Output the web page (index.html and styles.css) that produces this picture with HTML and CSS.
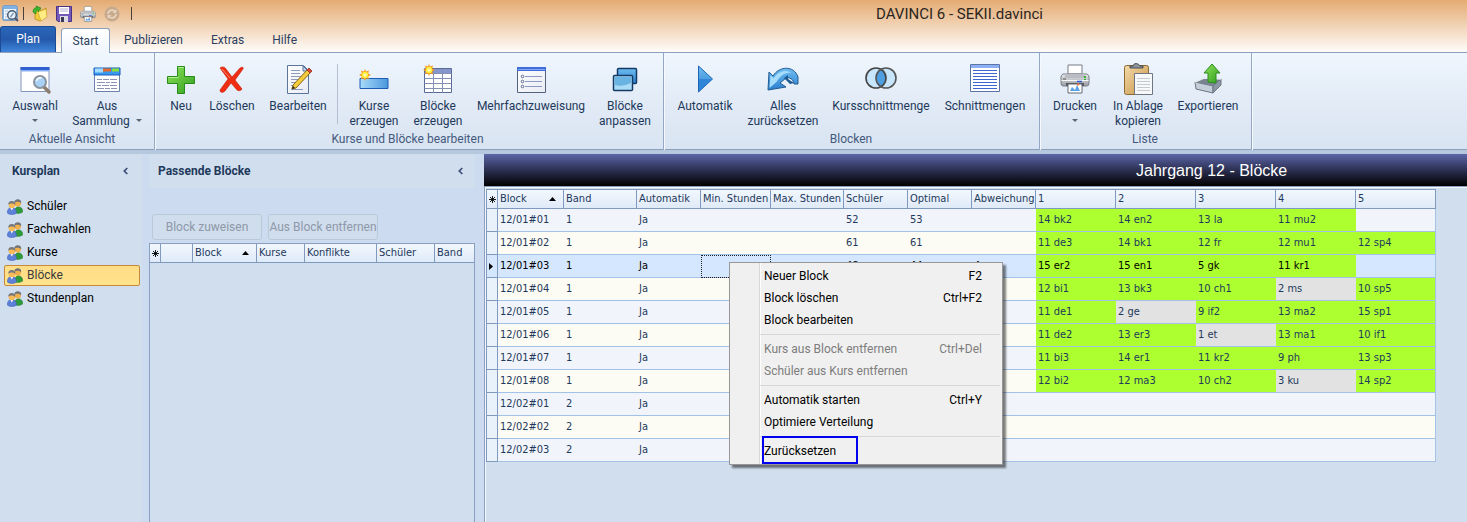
FILE: index.html
```html
<!DOCTYPE html>
<html lang="de">
<head>
<meta charset="utf-8">
<title>DAVINCI 6 - SEKII.davinci</title>
<link rel="stylesheet" href="styles.css">
</head>
<body>
<svg class="defs" aria-hidden="true">
  <defs>
    <linearGradient id="sky" x1="0" y1="0" x2="1" y2="0"><stop offset="0" stop-color="#a8dcfb"/><stop offset="1" stop-color="#4a97dc"/></linearGradient>
    <linearGradient id="blueV" x1="0" y1="0" x2="0" y2="1"><stop offset="0" stop-color="#6fbdf0"/><stop offset="1" stop-color="#2a7fd0"/></linearGradient>
    <linearGradient id="greenV" x1="0" y1="0" x2="1" y2="1"><stop offset="0" stop-color="#8fe35c"/><stop offset="1" stop-color="#2f9d1c"/></linearGradient>
    <linearGradient id="grayV" x1="0" y1="0" x2="0" y2="1"><stop offset="0" stop-color="#e6e8ea"/><stop offset="1" stop-color="#9a9ea4"/></linearGradient>
    <linearGradient id="wood" x1="0" y1="0" x2="1" y2="1"><stop offset="0" stop-color="#f3dba8"/><stop offset="1" stop-color="#c79245"/></linearGradient>
    <linearGradient id="paper" x1="0" y1="0" x2="1" y2="1"><stop offset="0" stop-color="#ffffff"/><stop offset="1" stop-color="#e8ebf3"/></linearGradient>
    <symbol id="star" viewBox="0 0 12 12"><path d="M6 0l1.100 2.600L10 1.500 9.200 4.500 12 6 9.200 7.300 10 10.300 7.100 9.400 6 12 4.900 9.400 2 10.300 2.800 7.300 0 6 2.800 4.500 2 1.500 4.900 2.600z" fill="#f79a1e"/><circle cx="6" cy="6" r="3.200" fill="#ffef3c"/><circle cx="6" cy="6" r="1.500" fill="#fffbc0"/></symbol>
    <symbol id="people" viewBox="0 0 16 16">
      <path d="M7.500 13.800c0-3.800 1.500-6 4-6 2.800 0 4.200 2.200 4.200 5.200-2 1.600-5.500 1.800-8.200.8z" fill="#2f9a3a" stroke="#1e7a2a" stroke-width=".5"/>
      <circle cx="10.800" cy="4.300" r="3.200" fill="#f2b04c"/><path d="M7.300 4c-.3-2.300 1.400-3.700 3.500-3.700 2.200 0 3.700 1.600 3.400 4-.8-1-2.200-1.600-3.500-1.600-1.200 0-2.500.3-3.400 1.300z" fill="#707478"/>
      <path d="M.3 14c0-3.500 1.500-5.500 4.300-5.500 3 0 4.900 2 4.900 5.500-2.500 2-6.800 2-9.200 0z" fill="#5d80d8" stroke="#3c5fbc" stroke-width=".5"/>
      <path d="M3.300 8.700l1.500 2.800 1.500-2.800z" fill="#fff"/>
      <circle cx="4.900" cy="6" r="3.200" fill="#f7bb58"/><path d="M1.300 5.700C1 3.400 2.600 2 4.700 2c2.300 0 3.900 1.600 3.600 4-.8-1-2.200-1.600-3.500-1.600-1.300 0-2.600.3-3.500 1.300z" fill="#75797d"/>
    </symbol>
    <symbol id="printer" viewBox="0 0 30 30">
      <path d="M8 10V1h14v9z" fill="#fff" stroke="#777c84"/>
      <path d="M3 10h24q2 1 2 3v6q0 3-2 3H3q-2 0-2-3v-6q0-2 2-3z" fill="url(#grayV)" stroke="#7b8088"/>
      <path d="M5 10h20v4H5z" fill="#b9bdc3"/><path d="M1.500 16.500h27" stroke="#f7f8f9"/>
      <path d="M6 19h18v3H6z" fill="#53575d"/><path d="M17 17.500h5" stroke="#2e5cd8" stroke-width="1.500"/>
      <path d="M25 12v2M25 15v1" stroke="#35b52c" stroke-width="2"/><path d="M3 15h3" stroke="#555"/>
      <path d="M8 20h14v9H8z" fill="#fff" stroke="#656a72"/><path d="M10 27l2-4 3 3 2-5 3 6z" fill="#58a3e8"/><path d="M17 21l2-1" stroke="#f47c4c" stroke-width="2"/>
    </symbol>
    <symbol id="asterisk" viewBox="0 0 7 7"><path d="M3.500 0v7M0 3.500h7M1 1l5 5M6 1L1 6" stroke="#000" stroke-width=".9"/></symbol>
    <symbol id="sortup" viewBox="0 0 7 4"><path d="M3.500 0L7 4H0z" fill="#000"/></symbol>
    <symbol id="chevron" viewBox="0 0 5 8"><path d="M4.300 1L1.300 4l3 3" fill="none" stroke="#3d4d78" stroke-width="1.700"/></symbol>
  </defs>
</svg>

<div class="app">
  <header class="caption">
    <div class="quick">
      <svg width="17" height="17" viewBox="0 0 17 17"><rect x=".5" y=".5" width="15" height="15" rx="2" fill="#7fb2e2" stroke="#7d9dc2"/><path d="M2 4h12v10H2z" fill="#eef5fc"/><path d="M3 6h3M3 9h2M3 12h2" stroke="#a9c3e0"/><circle cx="10" cy="10" r="4.300" fill="#e5f1fb" stroke="#485a70" stroke-width="1.500"/><path d="M8.500 12l3-4" stroke="#7593b5" stroke-width="1.300"/><path d="M13 13l3 3" stroke="#556" stroke-width="2"/></svg>
      <span class="quick-sep"></span>
      <button class="quick-btn" aria-label="Öffnen"><svg width="16" height="16" viewBox="0 0 16 16"><path d="M3 4l5-1 1 2 5-3v9l-6 4-5-2z" fill="#f3cc3a" stroke="#b88d18" stroke-width=".8"/><path d="M6 6l8-3 1 8-6 4z" fill="#ffec83" stroke="#c69c22" stroke-width=".6"/><path d="M1 6c0-3 2-5 4-4l-1-2 5 2-3 4v-2C4 4 4 6 4 8z" fill="#3cb82e" stroke="#1b7c17" stroke-width=".6"/></svg></button>
      <button class="quick-btn" aria-label="Speichern"><svg width="16" height="16" viewBox="0 0 16 16"><path d="M.5.5h15v15H2L.5 14z" fill="#7459b8" stroke="#493187"/><path d="M3 1h10v7H3z" fill="#fff"/><path d="M4 3h8M4 5h8" stroke="#b6aed0"/><path d="M4 10h8v6H4z" fill="#dddce6"/><path d="M5 11h3v5H5z" fill="#3c3854"/></svg></button>
      <button class="quick-btn" aria-label="Drucken"><svg width="16" height="16"><use href="#printer"/></svg></button>
      <button class="quick-btn" aria-label="Wiederholen" disabled><svg width="16" height="16" viewBox="0 0 16 16"><circle cx="8" cy="8" r="7.500" fill="#c7aa8c"/><path d="M4 8a4 4 0 0 1 7-2.500M12 8a4 4 0 0 1-7 2.500" fill="none" stroke="#e9d4bd" stroke-width="1.800"/><path d="M12.500 3v4h-4zM3.500 13V9h4z" fill="#e9d4bd"/></svg></button>
      <span class="quick-sep last"></span>
    </div>
    <h1 class="caption-title">DAVINCI 6 - SEKII.davinci</h1>
  </header>

  <nav class="tabs">
    <button class="tab plan">Plan</button>
    <button class="tab active">Start</button>
    <button class="tab">Publizieren</button>
    <button class="tab">Extras</button>
    <button class="tab">Hilfe</button>
  </nav>

  <section class="ribbon">
    <div class="group view">
      <div class="tools">
        <button class="tool w70"><svg width="32" height="32" viewBox="0 0 32 32"><path d="M2 3.500h28v24H2z" fill="#fff" stroke="#8496bb"/><path d="M1.500 3h29v3h-29z" fill="#2f5fd0"/><path d="M2 6h28v1.500H2z" fill="#86aef2"/><path d="M25 23l5 5" stroke="#8d7d6d" stroke-width="3.500" stroke-linecap="round"/><circle cx="21" cy="18" r="6" fill="#a9d2f6" stroke="#8a939e" stroke-width="2"/><path d="M17.500 17a4 4 0 0 1 5-3" fill="none" stroke="#fff" stroke-width="1.500"/></svg><span class="cap">Auswahl</span><i class="drop"></i></button>
        <button class="tool w74"><svg width="32" height="32" viewBox="0 0 32 32"><path d="M3.500 4.500h25v23h-25z" fill="#fff" stroke="#6c82a8"/><path d="M3 4h26v7H3z" fill="#3a98ee" stroke="#1a5dbc"/><path d="M4 4.500h8v4H4z" fill="#a6dcff"/><path d="M12 4.500h8v3h-8z" fill="#e56a2d"/><path d="M21 4.500h7v3h-7z" fill="#8adf38"/><path d="M6 15.500h5m1 0h6m1 0h7M6 18.500h8m1 0h4m1 0h6M6 21.500h4m1 0h7m1 0h7M6 24.500h7m1 0h5m1 0h6" stroke="#8a93b4"/></svg><span class="cap">Aus<br>Sammlung<i class="drop beside"></i></span></button>
      </div>
      <h2 class="group-name">Aktuelle Ansicht</h2>
    </div>
    <div class="group edit">
      <div class="tools">
        <button class="tool w44"><svg width="32" height="32" viewBox="0 0 32 32"><path d="M12.500 2.500h7v10h10v7h-10v10h-7v-10h-10v-7h10z" fill="url(#greenV)" stroke="#278a1b"/><path d="M13.500 3.500h5M3.500 13.500h10" stroke="#b8f094"/></svg><span class="cap">Neu</span></button>
        <button class="tool w58"><svg width="32" height="32" viewBox="0 0 32 32"><path d="M4 4c2-2 5-1 6 1l6 8 8-9c2-1 4-1 3 1l-8 11 7 9c-1 2-4 2-5 1l-6-7-6 8c-2 2-5 2-5-1l8-11z" fill="#ee2d12" stroke="#c81d0a" stroke-width=".6"/><path d="M6 5l8 9" stroke="#ff8a6c"/></svg><span class="cap">Löschen</span></button>
        <button class="tool w74"><svg width="32" height="32" viewBox="0 0 32 32"><path d="M5.500 1.500h16l5 5v23h-21z" fill="url(#paper)" stroke="#5b7499"/><path d="M21 2v5h5z" fill="#c9daf0" stroke="#5b7499"/><path d="M9 6.500h9M9 9.500h9M9 12.500h12M9 15.500h9M9 18.500h7M9 21.500h4M9 25.500h12" stroke="#8d9bbb"/><path d="M11 21L26 5l3 3-15 16-4 1z" fill="#f5cc3c" stroke="#87651a"/><path d="M25 6l2-2 3 3-2 2z" fill="#e64a34" stroke="#943"/><path d="M10 25l1-3 2 2z" fill="#222"/></svg><span class="cap">Bearbeiten</span></button>
        <span class="tool-sep"></span>
        <button class="tool w68"><svg width="32" height="32" viewBox="0 0 32 32"><path d="M2 14.500h28v10H2z" fill="url(#sky)" stroke="#1d5db8"/><use href="#star" x="1" y="5" width="12" height="12"/></svg><span class="cap">Kurse<br>erzeugen</span></button>
        <button class="tool w60"><svg width="32" height="32" viewBox="0 0 32 32"><path d="M2.500 4.500h27v24h-27z" fill="#fff" stroke="#5a6a95"/><path d="M3 5h26v4H3z" fill="#8596cc"/><path d="M2.500 9.500h27M2.500 14.500h27M2.500 19.500h27M2.500 24.500h27M11.500 5v24M20.500 5v24" stroke="#8290b4"/><use href="#star" x="1" y="0" width="12" height="12"/></svg><span class="cap">Blöcke<br>erzeugen</span></button>
        <button class="tool w126"><svg width="32" height="32" viewBox="0 0 32 32"><path d="M2.500 3.500h28v25h-28z" fill="url(#paper)" stroke="#52627f"/><path d="M2 3h29v4H2z" fill="#3e6cd8"/><path d="M3 5h27v1H3z" fill="#84a9f4"/><g fill="none" stroke="#5b6a93"><circle cx="7.500" cy="12.500" r="1.300"/><circle cx="7.500" cy="17.500" r="1.300"/><circle cx="7.500" cy="22.500" r="1.300"/><path d="M10 12.500h17M10 17.500h17M10 22.500h17" stroke="#8b9ac4"/></g></svg><span class="cap">Mehrfachzuweisung</span></button>
        <button class="tool w62"><svg width="32" height="32" viewBox="0 0 32 32"><rect x="8.500" y="4.500" width="19" height="15" rx="1" fill="url(#blueV)" stroke="#143b66" stroke-width="1.500"/><rect x="4.500" y="11.500" width="19" height="15" rx="1" fill="#a9daf6" stroke="#143b66" stroke-width="1.500"/><path d="M6 13h16v6q-8 4-16 2z" fill="#68b3e2"/></svg><span class="cap">Blöcke<br>anpassen</span></button>
      </div>
      <h2 class="group-name">Kurse und Blöcke bearbeiten</h2>
    </div>
    <div class="group block">
      <div class="tools">
        <button class="tool w72"><svg width="32" height="32" viewBox="0 0 32 32"><path d="M9.500 2v26l14-13z" fill="url(#blueV)" stroke="#1d64b4"/><path d="M10 15h13L10 27z" fill="#2f86d8"/></svg><span class="cap">Automatik</span></button>
        <button class="tool w84"><svg width="32" height="32" viewBox="0 0 32 32"><path d="M1 26L2 8l4 4C12 2 27 1 31 13v7h-4c-1-5-4-7-8-6l-6 5 6 4z" fill="url(#blueV)" stroke="#225b91"/><path d="M2.500 24l1-13 3 3c5-7 13-9 18-5-7-1-11 3-15 9z" fill="#a5dcfb"/><path d="M17 14l4-3v4l6 4-4 1z" fill="#1c5a92"/></svg><span class="cap">Alles<br>zurücksetzen</span></button>
        <button class="tool w112"><svg width="34" height="32" viewBox="0 0 34 32"><circle cx="12" cy="14" r="10" fill="#c7e6fb"/><circle cx="22" cy="14" r="10" fill="#c7e6fb"/><path d="M17 5.400a10 10 0 0 1 0 17.200 10 10 0 0 1 0-17.200z" fill="#4d9fe2"/><circle cx="12" cy="14" r="10" fill="none" stroke="#444" stroke-width="1.600"/><circle cx="22" cy="14" r="10" fill="none" stroke="#555" stroke-width="1.600"/></svg><span class="cap">Kursschnittmenge</span></button>
        <button class="tool w96"><svg width="32" height="32" viewBox="0 0 32 32"><path d="M1.500.5h29v27h-29z" fill="#fff" stroke="#5d74a6"/><path d="M2 1h28v3H2z" fill="#8db0f4"/><path d="M4 6.500h24M4 9.500h24M4 12.500h24M4 15.500h24M4 18.500h24M4 21.500h24M4 24.500h24" stroke="#3f65cf"/></svg><span class="cap">Schnittmengen</span></button>
      </div>
      <h2 class="group-name">Blocken</h2>
    </div>
    <div class="group list">
      <div class="tools">
        <button class="tool w58"><svg width="30" height="32" viewBox="0 0 30 32"><use href="#printer" width="30" height="30"/></svg><span class="cap">Drucken</span><i class="drop"></i></button>
        <button class="tool w68"><svg width="32" height="32" viewBox="0 0 32 32"><rect x="2.500" y="1.500" width="24" height="29" rx="2" fill="url(#wood)" stroke="#8c6a34"/><path d="M8 4V2h3q1-3 3.500-2.500T18 2h3v2z" fill="#8d939c" stroke="#474c54"/><path d="M12.500 9.500h18v21h-18z" fill="#f7f8fa" stroke="#6f7682"/><path d="M15 14.500h13M15 17.500h13M15 20.500h13M15 23.500h13M15 26.500h13" stroke="#c5c9d0"/></svg><span class="cap">In Ablage<br>kopieren</span></button>
        <button class="tool w72"><svg width="32" height="32" viewBox="0 0 32 32"><path d="M3 18l9-4 17 1-7 7z" fill="#78848f"/><path d="M3 18l18 4v7L4 25z" fill="#c4cfda" stroke="#6b7783"/><path d="M21 22l8-7v6l-8 8z" fill="#8b97a4" stroke="#6b7783"/><path d="M3 18l9-4 17 1" fill="none" stroke="#e4ebf1" stroke-width="1.500"/><path d="M20 0l8 9h-4v10l-8-1V9h-4z" fill="url(#greenV)" stroke="#2c8d1d"/></svg><span class="cap">Exportieren</span></button>
      </div>
      <h2 class="group-name">Liste</h2>
    </div>
  </section>

  <main class="work">
    <aside class="side">
      <header class="pane-head"><h2>Kursplan</h2><button class="fold" aria-label="Kursplan einklappen"><svg width="5" height="8"><use href="#chevron"/></svg></button></header>
      <nav class="side-list">
        <button class="side-item"><svg width="16" height="16"><use href="#people"/></svg>Schüler</button>
        <button class="side-item"><svg width="16" height="16"><use href="#people"/></svg>Fachwahlen</button>
        <button class="side-item"><svg width="16" height="16"><use href="#people"/></svg>Kurse</button>
        <button class="side-item selected"><svg width="16" height="16"><use href="#people"/></svg>Blöcke</button>
        <button class="side-item"><svg width="16" height="16"><use href="#people"/></svg>Stundenplan</button>
      </nav>
    </aside>

    <section class="match">
      <header class="pane-head"><h2>Passende Blöcke</h2><button class="fold" aria-label="Passende Blöcke einklappen"><svg width="5" height="8"><use href="#chevron"/></svg></button></header>
      <div class="actions">
        <button class="action" disabled>Block zuweisen</button>
        <button class="action" disabled>Aus Block entfernen</button>
      </div>
      <div class="match-list">
        <table class="grid">
          <colgroup><col class="c11"><col class="c32"><col class="c64"><col class="c48"><col class="c72"><col class="c58"><col></colgroup>
          <thead><tr><th class="mark"><svg width="7" height="7"><use href="#asterisk"/></svg></th><th></th><th><span class="sorted">Block<svg width="7" height="4"><use href="#sortup"/></svg></span></th><th>Kurse</th><th>Konflikte</th><th>Schüler</th><th>Band</th></tr></thead>
        </table>
      </div>
    </section>

    <section class="blocks">
      <h2 class="blocks-title">Jahrgang 12 - Blöcke</h2>
      <div class="blocks-body">
        <table class="grid full">
          <colgroup><col class="c11"><col class="c66"><col class="c73"><col class="c64"><col class="c70"><col class="c73"><col class="c64"><col class="c64"><col class="c64"><col class="c80"><col class="c80"><col class="c80"><col class="c80"><col class="c80"></colgroup>
          <thead><tr><th class="mark"><svg width="7" height="7"><use href="#asterisk"/></svg></th><th><span class="sorted">Block<svg width="7" height="4"><use href="#sortup"/></svg></span></th><th>Band</th><th>Automatik</th><th>Min. Stunden</th><th>Max. Stunden</th><th>Schüler</th><th>Optimal</th><th>Abweichung</th><th>1</th><th>2</th><th>3</th><th>4</th><th>5</th></tr></thead>
          <tbody>
            <tr><td></td><td>12/01#01</td><td>1</td><td>Ja</td><td></td><td></td><td>52</td><td>53</td><td></td><td class="ok">14 bk2</td><td class="ok">14 en2</td><td class="ok">13 la</td><td class="ok">11 mu2</td><td></td></tr>
            <tr><td></td><td>12/01#02</td><td>1</td><td>Ja</td><td></td><td></td><td>61</td><td>61</td><td></td><td class="ok">11 de3</td><td class="ok">14 bk1</td><td class="ok">12 fr</td><td class="ok">12 mu1</td><td class="ok">12 sp4</td></tr>
            <tr class="current"><td class="mark"><svg width="4" height="7" viewBox="0 0 4 7"><path d="M0 0l4 3.500L0 7z"/></svg></td><td>12/01#03</td><td>1</td><td>Ja</td><td class="focus"></td><td></td><td>48</td><td>44</td><td>4</td><td class="ok">15 er2</td><td class="ok">15 en1</td><td class="ok">5 gk</td><td class="ok">11 kr1</td><td></td></tr>
            <tr><td></td><td>12/01#04</td><td>1</td><td>Ja</td><td></td><td></td><td></td><td></td><td></td><td class="ok">12 bi1</td><td class="ok">13 bk3</td><td class="ok">10 ch1</td><td class="low">2 ms</td><td class="ok">10 sp5</td></tr>
            <tr><td></td><td>12/01#05</td><td>1</td><td>Ja</td><td></td><td></td><td></td><td></td><td></td><td class="ok">11 de1</td><td class="low">2 ge</td><td class="ok">9 if2</td><td class="ok">13 ma2</td><td class="ok">15 sp1</td></tr>
            <tr><td></td><td>12/01#06</td><td>1</td><td>Ja</td><td></td><td></td><td></td><td></td><td></td><td class="ok">11 de2</td><td class="ok">13 er3</td><td class="low">1 et</td><td class="ok">13 ma1</td><td class="ok">10 if1</td></tr>
            <tr><td></td><td>12/01#07</td><td>1</td><td>Ja</td><td></td><td></td><td></td><td></td><td></td><td class="ok">11 bi3</td><td class="ok">14 er1</td><td class="ok">11 kr2</td><td class="ok">9 ph</td><td class="ok">13 sp3</td></tr>
            <tr><td></td><td>12/01#08</td><td>1</td><td>Ja</td><td></td><td></td><td></td><td></td><td></td><td class="ok">12 bi2</td><td class="ok">12 ma3</td><td class="ok">10 ch2</td><td class="low">3 ku</td><td class="ok">14 sp2</td></tr>
            <tr><td></td><td>12/02#01</td><td>2</td><td>Ja</td><td></td><td></td><td></td><td></td><td></td><td></td><td></td><td></td><td></td><td></td></tr>
            <tr><td></td><td>12/02#02</td><td>2</td><td>Ja</td><td></td><td></td><td></td><td></td><td></td><td></td><td></td><td></td><td></td><td></td></tr>
            <tr><td></td><td>12/02#03</td><td>2</td><td>Ja</td><td></td><td></td><td></td><td></td><td></td><td></td><td></td><td></td><td></td><td></td></tr>
          </tbody>
        </table>
      </div>
    </section>
  </main>

  <div class="menu" role="menu">
    <button class="menu-item" role="menuitem"><span>Neuer Block</span><span>F2</span></button>
    <button class="menu-item" role="menuitem"><span>Block löschen</span><span>Ctrl+F2</span></button>
    <button class="menu-item" role="menuitem"><span>Block bearbeiten</span></button>
    <hr class="menu-sep">
    <button class="menu-item" role="menuitem" disabled><span>Kurs aus Block entfernen</span><span>Ctrl+Del</span></button>
    <button class="menu-item" role="menuitem" disabled><span>Schüler aus Kurs entfernen</span></button>
    <hr class="menu-sep">
    <button class="menu-item" role="menuitem"><span>Automatik starten</span><span>Ctrl+Y</span></button>
    <button class="menu-item" role="menuitem"><span>Optimiere Verteilung</span></button>
    <hr class="menu-sep">
    <button class="menu-item" role="menuitem"><span>Zurücksetzen</span></button>
    <span class="marker"></span>
  </div>
</div>
</body>
</html>
```
FILE: styles.css
```css
* { box-sizing: border-box; }
body { margin: 0; font: 12px/15px Roboto, "Open Sans", sans-serif; color: #1e395b; background: #cddbf0; }
button { font: inherit; color: inherit; background: none; border: 0; padding: 0; margin: 0; }
h1, h2 { margin: 0; font-weight: 400; }
svg { display: block; overflow: visible; flex: none; }
.defs { position: absolute; width: 0; height: 0; }
.app { position: relative; min-height: 100vh; display: flex; flex-direction: column; background: linear-gradient(#e4ab72, #fff 54px, #cddbf0 54px); }

.caption { display: flex; height: 27px; align-items: center; }
.quick { display: flex; align-items: center; padding-left: 2px; width: 876px; flex: none; }
.quick-sep { width: 1px; height: 13px; background: #4a4038; margin: 0 8px 0 4px; }
.quick-sep.last { margin: 0 0 0 3px; }
.quick-btn { margin-right: 8px; }
.caption-title { font-size: 15px; line-height: 24px; color: #2c2620; white-space: nowrap; }

.tabs { display: flex; align-items: flex-end; height: 26px; border-bottom: 1px solid #8ba0bc; }
.tab { height: 24px; padding: 0 14px; color: #2c4060; }
.tab.plan { height: 26px; width: 56px; color: #fff; background: linear-gradient(#2a66b8, #2459ab 50%, #3f86dc); border: 1px solid #1c4a94; border-bottom: 0; border-radius: 3px 3px 0 0; margin-right: 5px; }
.tab.active { height: 25px; width: 49px; padding: 0; border: 1px solid #8ba0bc; border-bottom: 0; border-radius: 3px 3px 0 0; background: linear-gradient(#fff, #eff5fd); margin-bottom: -1px; }

.ribbon { display: flex; height: 101px; background: linear-gradient(#eff6fe, #e2ebf6 50%, #d9e4f2); border-bottom: 4px solid #b5c8dd; box-shadow: inset 0 -1px #8ca0bd; }
.group { display: flex; flex-direction: column; justify-content: space-between; padding: 11px 7px 0 4px; border-right: 1px solid #94a7c3; box-shadow: 1px 0 #f5f9fe; }
.group.view { padding: 11px 10px 0 0; }
.group.block { padding: 11px 6px 0 5px; }
.group.list { padding: 11px 7px 0 6px; }
.tools { display: flex; align-items: flex-start; }
.tool { display: flex; flex-direction: column; align-items: center; white-space: nowrap; }
.cap { margin-top: 3px; }
.drop { width: 0; border: 3px solid transparent; border-top-color: #5a6575; border-bottom: 0; margin-top: 5px; }
.drop.beside { display: inline-block; margin: 0 0 3px 6px; }
.tool-sep { width: 1px; height: 60px; background: #b4c0d2; margin: 0 2px; }
.group-name { font-size: 12px; line-height: 15px; text-align: center; color: #44597e; padding-bottom: 3px; white-space: nowrap; }
.w44 { width: 44px; } .w58 { width: 58px; } .w60 { width: 60px; } .w62 { width: 62px; }
.w68 { width: 68px; } .w70 { width: 70px; } .w72 { width: 72px; } .w74 { width: 74px; }
.w84 { width: 84px; } .w96 { width: 96px; } .w112 { width: 112px; } .w126 { width: 126px; }

.work { flex: 1; display: flex; }
.side { width: 142px; flex: none; background: #d0deee; margin-right: 7px; }
.pane-head { display: flex; align-items: center; justify-content: space-between; height: 34px; padding: 0 14px 0 12px; }
.pane-head h2 { font-size: 12px; font-weight: 700; }
.side-list { display: flex; flex-direction: column; gap: 2px; padding: 8px 2px 0 4px; }
.side-item { display: flex; align-items: center; gap: 4px; height: 21px; padding: 0 2px; border: 1px solid transparent; border-radius: 2px; color: #000; }
.side-item.selected { background: linear-gradient(#ffdd88, #ffe38b); border-color: #c88a3a; color: #3c3c3c; }

.match { width: 326px; flex: none; display: flex; flex-direction: column; margin-right: 9px; }
.match .pane-head { background: #d0deee; padding: 0 12px 0 9px; }
.actions { display: flex; gap: 6px; padding: 26px 3px 3px; }
.action { width: 110px; height: 26px; border: 1px solid #bac9da; border-radius: 3px; background: #d0dded; color: #8e98a8; white-space: nowrap; }
.match-list { flex: 1; border: 1px solid #8ba0c0; border-bottom: 0; background: #d0deee; }

.grid { table-layout: fixed; border-collapse: separate; border-spacing: 0; width: 100%; font: 11px/14px "DejaVu Sans Condensed", "Open Sans", sans-serif; }
.grid th { height: 19px; padding: 0 0 0 2px; text-align: left; font-weight: 400; white-space: nowrap; background: linear-gradient(#f2f7fd, #dfeaf8); border-right: 1px solid #8099bf; border-bottom: 1px solid #8099bf; }
.match-list th:last-child { border-right: 0; }
.grid .mark { padding: 0 0 0 2px; }
.sorted { display: flex; align-items: center; justify-content: space-between; padding-right: 7px; }
.c11 { width: 11px; } .c32 { width: 32px; } .c48 { width: 48px; } .c58 { width: 58px; } .c64 { width: 64px; } .c66 { width: 66px; }
.c70 { width: 70px; } .c72 { width: 72px; } .c73 { width: 73px; } .c80 { width: 80px; }

.blocks { flex: 1; min-width: 0; display: flex; flex-direction: column; }
.blocks-title { height: 32px; padding-left: 652px; font: 16px/33px "Liberation Sans", Arial, sans-serif; color: #fff; white-space: nowrap; background: linear-gradient(#5b66a8, #2c3052 50%, #000); }
.blocks-body { flex: 1; border: 1px solid #8ba0c0; border-width: 1px 0 0 1px; background: #d0deee; padding: 2px 0 0 1px; box-shadow: inset 1px 1px #f4f8fd; }
.grid.full { width: 950px; border-left: 1px solid #8099bf; border-top: 1px solid #8099bf; }
.full td { height: 23px; padding: 0 0 0 2px; white-space: nowrap; background: #f1f5fb; border-bottom: 1px solid #a3c2e8; }
.full tr:nth-child(even) td { background: #fcfcf4; }
.full td:last-child { border-right: 1px solid #a3c2e8; }
.full tbody td:first-child { background: #e9f1fb; border-right: 1px solid #8099bf; border-bottom-color: #8099bf; }
.full tbody .current td { background: #d5e7ff; color: #000; }
.full tbody td.ok, .full tbody .current td.ok { background: #adff2f; }
.full tbody td.low { background: #e2e2e2; }
.full td.focus { outline: 1px dotted #222; outline-offset: -1px; }

.menu { position: absolute; left: 729px; top: 262px; width: 274px; padding: 2px; color: #000; background: linear-gradient(90deg, transparent 29px, #d8d8d8 29px 30px, #fff 30px 31px, transparent 31px) #f0f0f0; border: 1px solid #979797; box-shadow: 3px 3px 2px rgba(0, 0, 0, .5); }
.menu-item { display: flex; justify-content: space-between; align-items: center; width: 100%; height: 22px; padding: 0 18px 0 32px; white-space: nowrap; }
.menu-item:disabled { color: #7d7d7d; }
.menu-sep { height: 1px; border: 0; background: #d7d7d7; margin: 3px 0 3px 28px; }
.marker { position: absolute; left: 32px; bottom: 0; width: 96px; height: 28px; border: 2px solid #0000f0; }
```
